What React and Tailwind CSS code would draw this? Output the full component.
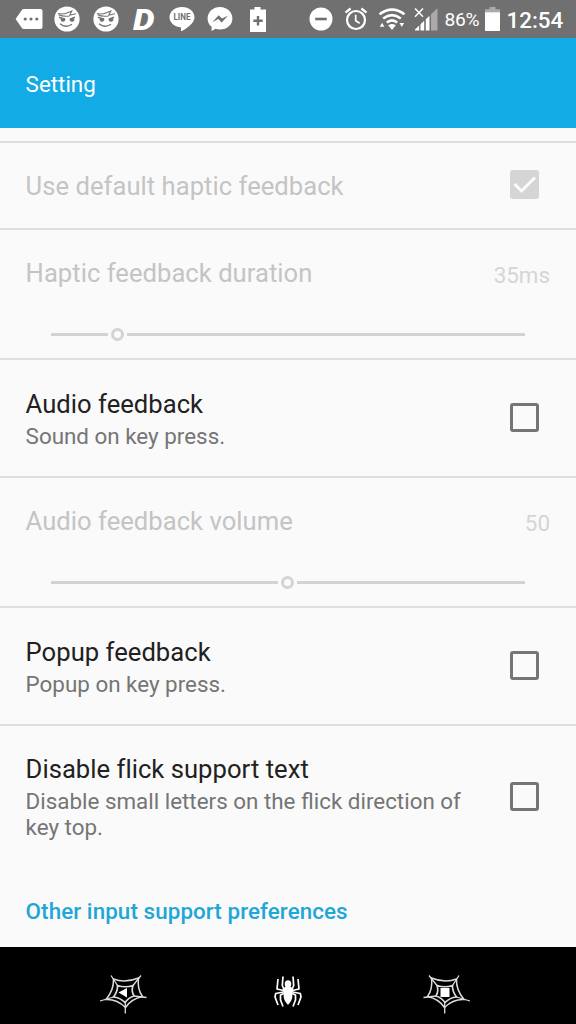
import React from "react";

function TagIcon() {
  return (
    <svg className="ml-[15px] h-6 w-7 shrink-0" viewBox="0 0 28 24">
      <path d="M9 2h16.500q2 0 2 2v16q0 2-2 2H9q-1.500 0-2.300-1.200L.6 12 6.700 3.200Q7.500 2 9 2Z" fill="#fff" />
      <circle cx="10.200" cy="12" r="1.600" fill="#707070" />
      <circle cx="16" cy="12" r="1.600" fill="#707070" />
      <circle cx="21.800" cy="12" r="1.600" fill="#707070" />
    </svg>
  );
}

function FaceIcon({ className }) {
  return (
    <svg className={`h-[26px] w-[26px] shrink-0 ${className}`} viewBox="0 0 26 26" fill="none" stroke="#707070">
      <circle cx="13" cy="13" r="12.600" fill="#fff" stroke="none" />
      <path d="M4 7.500q5 1.200 9.500-.8L17.800 5l-2 4.200 6-1.400M4.500 8.800q5 2.200 11 1.200" strokeWidth="1.100" />
      <path d="m5 11.300 6 2M21 11.300l-5 2" strokeWidth="1.500" />
      <path d="M7 12.800h4v1.800q-2.500 1.800-4 0ZM16 12.800h4v1.800q-2 1.800-4 0Z" fill="#707070" strokeWidth=".6" />
      <path d="M6 17.800q5.500 4.700 12 .5" strokeWidth="1.300" />
    </svg>
  );
}

function LineIcon() {
  return (
    <svg className="ml-[12.500px] h-[26px] w-[26px] shrink-0" viewBox="0 0 26 26">
      <path d="M13 1C5.800 1 .5 5.600.5 11.200c0 5 4.300 9 10.200 9.900 1.800.4 1.400 1.300 1.200 3.100-.1.900.4 1.100 1.300.6C17 22.600 25.500 17.500 25.500 11.200 25.500 5.600 20.200 1 13 1Z" fill="#fff" />
      <text x="4.500" y="14.300" textLength="17" lengthAdjust="spacingAndGlyphs" fontSize="8.200" fontWeight="700" fontFamily="Roboto, sans-serif" fill="#707070">LINE</text>
    </svg>
  );
}

function MessengerIcon() {
  return (
    <svg className="ml-3 h-[26px] w-[26px] shrink-0" viewBox="0 0 26 26">
      <path d="M13 1C6 1 .6 5.900.6 12.400c0 3.500 1.500 6.300 4 8.300v4.300l4-2.200c1.400.4 2.800.6 4.400.6 7 0 12.400-4.700 12.400-11S20 1 13 1Z" fill="#fff" />
      <path d="m5.300 16.300 6.300-7 3.500 3.300 6-3.200-6.400 7-3.400-3.300Z" fill="#707070" />
    </svg>
  );
}

function BatterySaverIcon() {
  return (
    <svg className="ml-4 h-[26px] w-[18px] shrink-0" viewBox="0 0 18 26">
      <path d="M5.500 1h6v2.500H17V26H1V3.500h4.500Z" fill="#fff" />
      <path d="M9 10v9.400M4.300 14.700h9.400" stroke="#707070" strokeWidth="2.400" />
    </svg>
  );
}

function DoNotDisturbIcon() {
  return (
    <svg className="ml-[41.500px] h-6 w-6 shrink-0" viewBox="0 0 24 24">
      <circle cx="12" cy="12" r="11.500" fill="#fff" />
      <path d="M6.200 12h11.600" stroke="#707070" strokeWidth="2.600" />
    </svg>
  );
}

function AlarmIcon() {
  return (
    <svg className="ml-[11.500px] h-6 w-6 shrink-0" viewBox="0 0 24 24" fill="none" stroke="#fff">
      <circle cx="12" cy="13" r="9" strokeWidth="2.200" />
      <path d="M1.500 5.600 6.600 1.500M17.400 1.500l5.100 4.100" strokeWidth="2.300" />
      <path d="M11.700 7.700v6l4 2.500" strokeWidth="1.700" />
    </svg>
  );
}

function WifiIcon() {
  return (
    <svg className="ml-[9.500px] h-6 w-7 shrink-0" viewBox="0 0 28 24" fill="none" stroke="#fff">
      <path d="M1.500 7.300q12.500-9.300 25 0M5.200 11.500q8.800-6.800 17.600 0M8.800 15.600q5.200-4.400 10.400 0" strokeWidth="2.600" />
      <path d="M10.200 18.300q3.800-2.800 7.600 0L14 22.900Z" fill="#fff" stroke="none" />
      <path d="m1.800 19.800 2.300-4 2.300 4ZM21.500 16l2.300 4 2.300-4Z" fill="#fff" stroke="none" />
    </svg>
  );
}

function SignalIcon() {
  return (
    <svg className="ml-2 h-6 w-6 shrink-0" viewBox="0 0 24 24">
      <path d="m1 1.500 8 8.300M9 1.500 1 9.800" stroke="#fff" strokeWidth="1.500" />
      <path d="M1 23.500v-1l4.200-4v5ZM6.500 23.500v-6.300l3.700-3.500v9.800ZM11.800 23.500V12.200L15.500 8.700v14.800Z" fill="#fff" />
      <path d="M17 23.500V7.300l6.500-6v22.200Z" fill="#aaa" />
    </svg>
  );
}

function BatteryIcon() {
  return (
    <svg className="h-6 w-[15px] shrink-0" viewBox="0 0 15 24">
      <path d="M4.500 0h6v2.200H15V6H0V2.200h4.500Z" fill="#aaa" />
      <path d="M0 5.300h15V24H0Z" fill="#fff" />
    </svg>
  );
}

function StatusBar() {
  return (
    <div className="flex h-[38px] shrink-0 items-center bg-[#707070] text-white">
      <TagIcon />
      <FaceIcon className="ml-[11px]" />
      <FaceIcon className="ml-[12.500px]" />
      <svg className="ml-[9px] h-[38px] w-[29px] shrink-0" viewBox="0 0 29 38">
        <text x="5" y="29.500" textLength="21.500" lengthAdjust="spacingAndGlyphs" fontSize="30" fontWeight="900" fontStyle="italic" fontFamily="Roboto, sans-serif" fill="#fff">D</text>
      </svg>
      <LineIcon />
      <MessengerIcon />
      <BatterySaverIcon />
      <DoNotDisturbIcon />
      <AlarmIcon />
      <WifiIcon />
      <SignalIcon />
      <span className="ml-[7px] w-[40px] pt-[2px] text-[19.200px] leading-6 tracking-[-0.300px]">86%</span>
      <BatteryIcon />
      <span className="ml-[7px] pt-[2px] text-[22.400px] leading-6 font-medium">12:54</span>
    </div>
  );
}

function Checkbox({ checked }) {
  if (checked) {
    return (
      <span className="mr-[11px] flex size-[29px] shrink-0 items-center justify-center rounded-[3px] bg-[#d5d5d5]">
        <svg className="size-[29px]" viewBox="0 0 29 29" fill="none" stroke="#fcfcfc" strokeWidth="3">
          <path d="m4.500 14 7 7L25 7.500" />
        </svg>
      </span>
    );
  }
  return <span className="mr-[11px] size-[29px] shrink-0 rounded-[3px] border-3 border-[#757575]" />;
}

function CheckRow({ title, summary, className, textClassName = "pt-[2px]" }) {
  return (
    <div className={`flex items-center justify-between pr-[26px] pl-[25.600px] ${className}`}>
      <div className={`w-[450px] ${textClassName}`}>
        <h2 className="text-[25.600px] leading-[30px] tracking-[0.030px] text-[#212121]">{title}</h2>
        <p className="mt-1 text-[22.400px] leading-[26px] text-[#757575]">{summary}</p>
      </div>
      <div className="flex pb-[2px]">
        <Checkbox />
      </div>
    </div>
  );
}

function SliderRow({ title, value, percent }) {
  return (
    <div className="h-[130px] border-b-2 border-[#dedede] pr-[26px] pl-[25.600px]">
      <div className="flex items-start justify-between pt-[28px]">
        <h2 className="text-[25.600px] leading-[30px] tracking-[0.030px] text-[#c4c4c4]">{title}</h2>
        <span className="pt-1 text-[22.400px] leading-[26px] text-[#d5d5d5]">{value}</span>
      </div>
      <div className="mt-[36px] mr-[25px] ml-[25.400px] flex h-5 items-center">
        <span className="h-[3px] bg-[#d3d3d3]" style={{ width: `calc(${percent}% - 9.500px)` }} />
        <span className="mx-[3px] size-[13px] shrink-0 rounded-full border-3 border-[#d3d3d3]" />
        <span className="h-[3px] grow bg-[#d3d3d3]" />
      </div>
    </div>
  );
}

// Outer strands bow inward between the five anchor points
function WebIcon({ className, children }) {
  return (
    <svg className="h-[44px] w-[48px]" viewBox="0 0 48 44" fill="none" stroke="#dcdcdc" strokeWidth="1.500">
      <g className={className}>
        <path d="M14.500 7Q26 11.500 39.500 6Q38 17 43.500 24.500Q32 27 26.500 35.500Q18 27 7 27.500Q15 18 14.500 7Z" />
        <path d="M18.500 13.500Q26 16 34 13.500Q32 19 35 24Q29 26 26 30.500Q21 25.500 14.500 25Q19 19 18.500 13.500Z" strokeWidth="1.700" />
        <path d="M12 3.500l6.500 10M42 3.500l-8 10M47.500 25.500l-12.500-1.500M1 29l13.500-4M26.300 41.500V30" strokeWidth="1.300" />
      </g>
      {children}
    </svg>
  );
}

function SpiderIcon() {
  return (
    <svg className="-mt-[5px] ml-[6px] h-[33px] w-7" viewBox="0 0 28 33" fill="none" stroke="#fff" strokeWidth="1.700" strokeLinejoin="round">
      <ellipse cx="14" cy="9" rx="3.300" ry="3.800" fill="#fff" stroke="none" />
      <path d="M14 11q6 1.500 5.300 4.500L18.300 18.500q.8 6.500-4.300 11.500-5.100-5-4.300-11.500L8.700 15.500Q8 12.500 14 11Z" fill="#fff" stroke="none" />
      <path d="M10 14.500 8.300 10.500 9 1.500M18 14.500l1.700-4L19 1.500M9.500 15.500l-6.500-1.500L4 4M18.500 15.500l6.500-1.500L24 4M9.500 17l-7.800 1.500-.7 3.500 3 8M18.500 17l7.800 1.500.7 3.500-3 8M10 18.500 6.500 20v5l2.500 6.500M18 18.500l3.500 1.500v5L19 31.500" />
    </svg>
  );
}

export default function App() {
  return (
    <div className="flex h-[1024px] w-[576px] flex-col overflow-hidden bg-[#fafafa] font-['Roboto',sans-serif]">
      <StatusBar />
      <header className="flex h-[90px] shrink-0 items-center bg-[#13abe5] pt-px pl-[25.600px]">
        <h1 className="text-[22.400px] leading-[26px] text-white">Setting</h1>
      </header>

      <main className="grow pt-[13px]">
        <div className="flex h-[89px] items-center justify-between border-y-2 border-[#dedede] pr-[26px] pl-[25.600px]">
          <h2 className="pt-px text-[25.600px] leading-[30px] tracking-[0.030px] text-[#c4c4c4]">Use default haptic feedback</h2>
          <div className="flex pb-[2px]">
            <Checkbox checked />
          </div>
        </div>
        <SliderRow title="Haptic feedback duration" value="35ms" percent={14} />
        <CheckRow title="Audio feedback" summary="Sound on key press." className="h-[118px] border-b-2 border-[#dedede]" />
        <SliderRow title="Audio feedback volume" value="50" percent={50} />
        <CheckRow title="Popup feedback" summary="Popup on key press." className="h-[118px] border-b-2 border-[#dedede]" />
        <CheckRow
          title="Disable flick support text"
          summary="Disable small letters on the flick direction of key top."
          className="h-[143px]"
          textClassName="pb-px"
        />
        <h3 className="pt-[29px] pl-[25.600px] text-[22.400px] leading-[27px] font-medium tracking-[0.080px] text-[#21a6d8]">Other input support preferences</h3>
      </main>

      <nav className="flex h-[77px] shrink-0 items-center justify-between bg-black pt-[17px] pr-[105px] pl-[99px]">
        <WebIcon>
          <path d="M19.500 20.500 28 16v9.500Z" fill="#fff" stroke="none" />
        </WebIcon>
        <SpiderIcon />
        <WebIcon className="origin-center -scale-x-100">
          <path d="M17.500 16h9v9h-9Z" fill="#fff" stroke="none" />
        </WebIcon>
      </nav>
    </div>
  );
}
